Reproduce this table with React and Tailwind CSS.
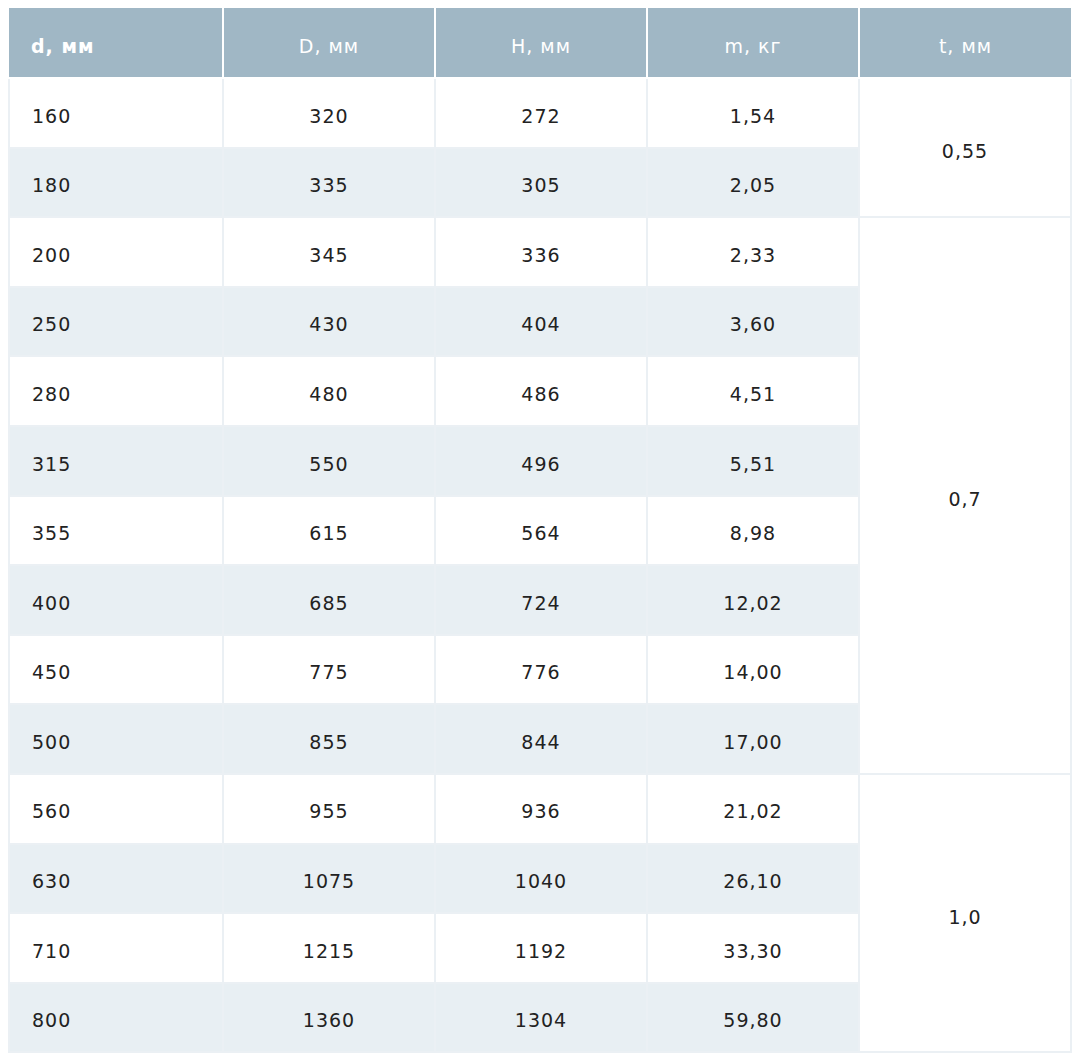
import React from "react"

const rows = [
  ["160", "320", "272", "1,54"],
  ["180", "335", "305", "2,05"],
  ["200", "345", "336", "2,33"],
  ["250", "430", "404", "3,60"],
  ["280", "480", "486", "4,51"],
  ["315", "550", "496", "5,51"],
  ["355", "615", "564", "8,98"],
  ["400", "685", "724", "12,02"],
  ["450", "775", "776", "14,00"],
  ["500", "855", "844", "17,00"],
  ["560", "955", "936", "21,02"],
  ["630", "1075", "1040", "26,10"],
  ["710", "1215", "1192", "33,30"],
  ["800", "1360", "1304", "59,80"],
]

// t column: which row starts a group and how many rows it spans
const tGroups = { 0: ["0,55", 2], 2: ["0,7", 8], 10: ["1,0", 4] }

const App = () => {
  return (
    <div className="w-[1080px] h-[1062px] bg-white pt-2 pl-2" style={{ fontFamily: '"DejaVu Sans", "Open Sans", sans-serif' }}>
      <table className="w-[1062px] table-fixed border-collapse text-[19px] text-[#222] tracking-[1px]">
        <colgroup>
          <col className="w-[214px]" />
          <col className="w-[212px]" />
          <col className="w-[212px]" />
          <col className="w-[212px]" />
          <col className="w-[212px]" />
        </colgroup>
        <thead>
          <tr className="h-[70px] bg-[#a0b7c5] text-white">
            <th className="border-2 border-white border-t-0 border-l-0 text-left pl-[22px] pt-[8px] font-bold">d, мм</th>
            <th className="border-2 border-white border-t-0 pt-[8px] font-normal">D, мм</th>
            <th className="border-2 border-white border-t-0 pt-[8px] font-normal">H, мм</th>
            <th className="border-2 border-white border-t-0 pt-[8px] font-normal">m, кг</th>
            <th className="border-2 border-white border-t-0 border-r-0 pt-[8px] font-normal">t, мм</th>
          </tr>
        </thead>
        <tbody>
          {rows.map((r, i) => (
            <tr key={i} className={i % 2 == 0 ? "h-[69.6px] bg-white" : "h-[69.6px] bg-[#e8eff3]"}>
              <td className="border-2 border-[#ebf0f4] text-left pl-[22px] pt-[6px] font-medium">{r[0]}</td>
              <td className="border-2 border-[#ebf0f4] text-center pt-[6px]">{r[1]}</td>
              <td className="border-2 border-[#ebf0f4] text-center pt-[6px]">{r[2]}</td>
              <td className="border-2 border-[#ebf0f4] text-center pt-[6px]">{r[3]}</td>
              {tGroups[i] && (
                <td rowSpan={tGroups[i][1]} className="border-2 border-[#ebf0f4] bg-white text-center pt-[8px]">
                  {tGroups[i][0]}
                </td>
              )}
            </tr>
          ))}
        </tbody>
      </table>
    </div>
  )
}

export default App
